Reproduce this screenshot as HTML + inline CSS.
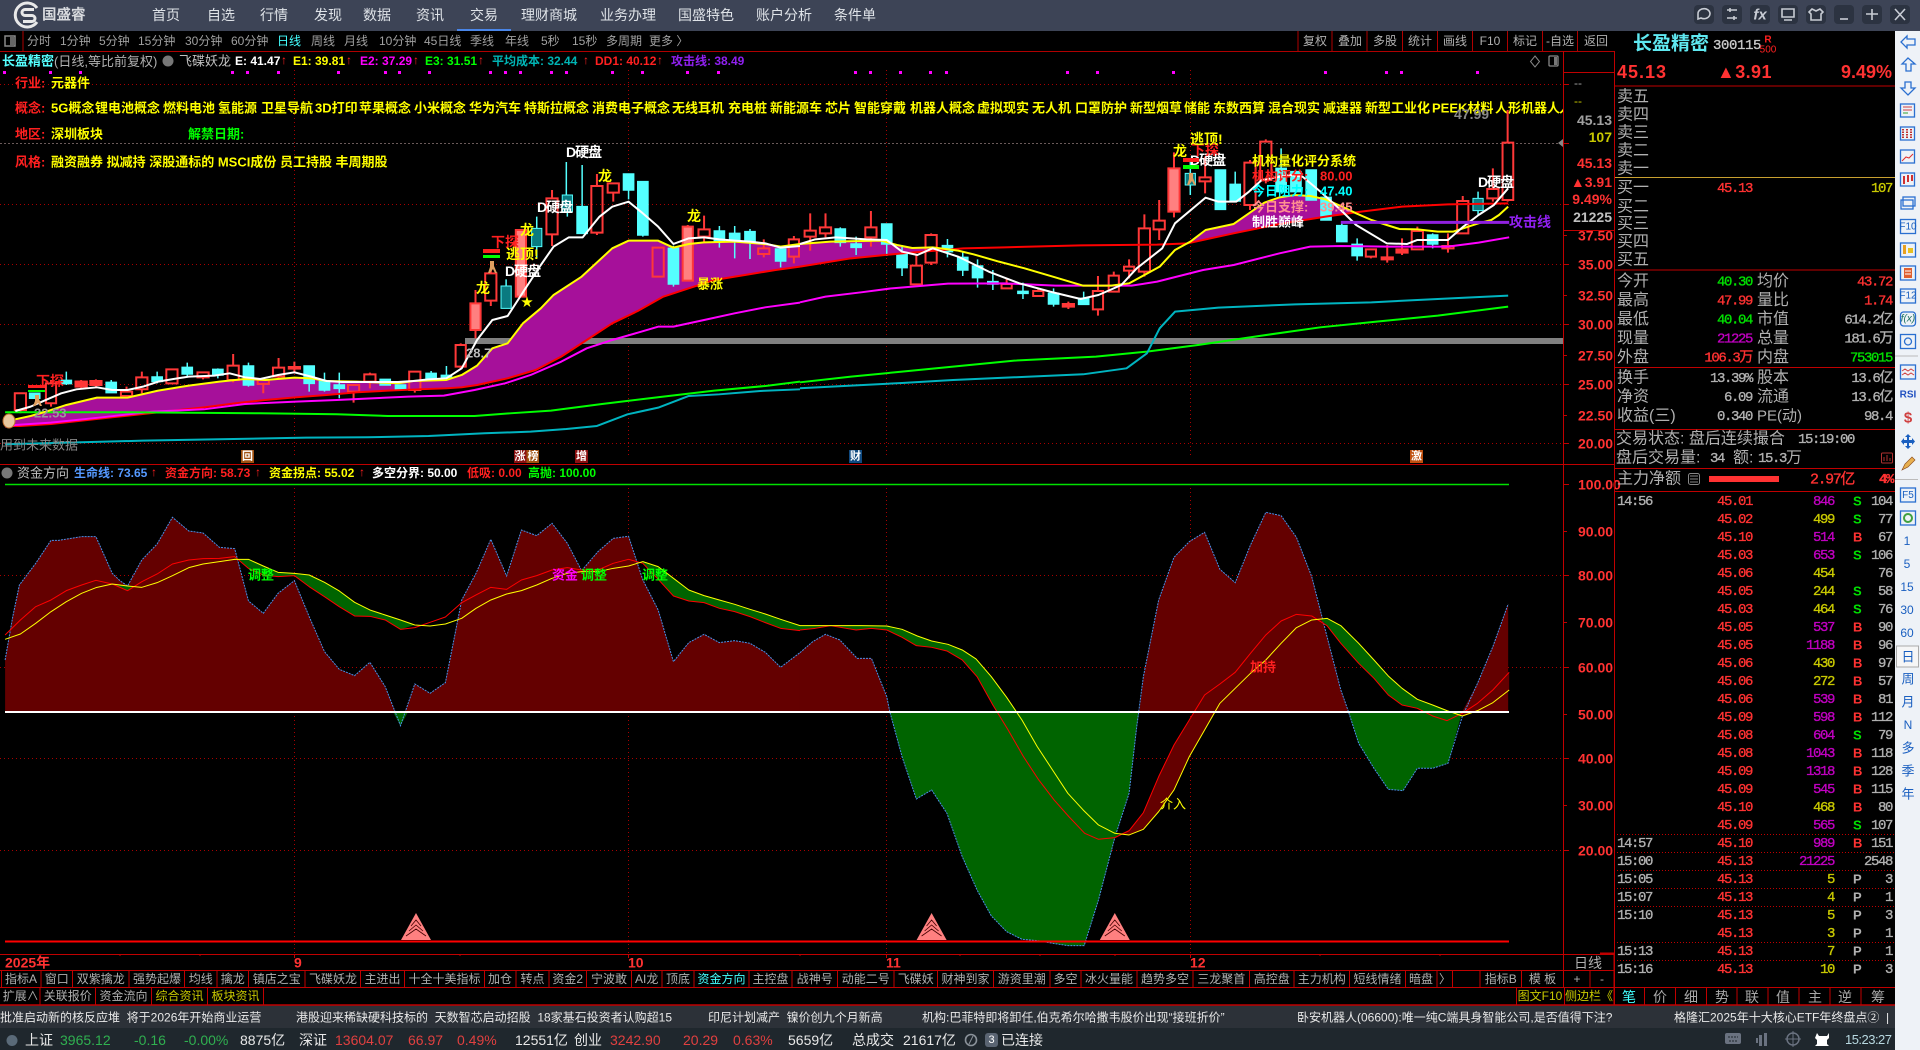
<!DOCTYPE html>
<html><head><meta charset="utf-8"><title>长盈精密</title>
<style>
html,body{margin:0;padding:0;background:#000;width:1920px;height:1050px;overflow:hidden}
svg{display:block}
text{font-family:"Liberation Sans","Noto Sans CJK SC",sans-serif;dominant-baseline:central;white-space:pre}
.z *{vector-effect:non-scaling-stroke}
.l{fill:none;stroke-linejoin:round}
.cr{fill:none;stroke:#ff3838;stroke-width:2}
.cp{fill:#ff8080;stroke:#ff3838;stroke-width:2}
.cf{fill:#ff3838;stroke:#ff3838;stroke-width:2}
.cc{fill:#54ffff;stroke:#54ffff;stroke-width:1.5}
.ct{fill:#0a7a80;stroke:#54ffff;stroke-width:1}
.tb{font-size:12px;fill:#a0a0a0}
.mn{font-size:14px;fill:#dfe3e8}
.b{font-weight:700}
.c13{font-size:13px;font-weight:700}
.y{fill:#ffff00}.r{fill:#ff2020}.g{fill:#00ff00}.w{fill:#fff}
.ax{font-size:14px;font-weight:700;fill:#ff3232}
.m{font-family:"Liberation Mono","Noto Sans CJK SC",monospace;font-size:14px;letter-spacing:-1.4px;stroke-width:.35px;transform:translateY(1px)}
.e{text-anchor:end}
.lb{font-size:16px;fill:#b0b0b0}
.gy{fill:#b0b0b0}.rd{fill:#ff3232}.gn{fill:#00e000}.mg{fill:#c000c0}.ye{fill:#c8c800}
.m.gy{stroke:#b0b0b0}.m.rd{stroke:#ff3232}.m.gn{stroke:#00e000}.m.mg{stroke:#c000c0}.m.ye{stroke:#c8c800}
.t{font-size:12px;fill:#b0b0b0;text-anchor:middle}
.n{font-size:12px;fill:#e8e8e8}
.s{font-size:14px}
.ic{fill:none;stroke:#2a6fd0;stroke-width:1.3}
.sb{font-size:12px;fill:#1a5fc0;text-anchor:middle}
.btn{fill:#2c3341}
.bi{fill:none;stroke:#c8ccd4;stroke-width:1.6}
</style></head><body>
<svg width="1920" height="1050" viewBox="0 0 1920 1050" xmlns="http://www.w3.org/2000/svg">
<defs>
<clipPath id="ca"><rect x="0" y="484" width="1563" height="228"/></clipPath>
<clipPath id="cb"><rect x="0" y="712" width="1563" height="240"/></clipPath>
<clipPath id="cm"><rect x="0" y="52" width="1563" height="412"/></clipPath>
</defs>
<rect width="1920" height="1050" fill="#000"/>
<!-- title bar -->
<rect width="1920" height="31" fill="#3d4456"/>
<rect x="457" y="29" width="54" height="2" fill="#4a86e8"/>
<path d="M37 8a12 12 0 1 0 0 14" fill="none" stroke="#e8e8e8" stroke-width="3"/>
<path d="M34 9.5H25a3 3 0 0 0 0 6h7a3 3 0 0 1 0 6h-9" fill="none" stroke="#e8e8e8" stroke-width="3"/>
<text x="42" y="15.5" font-size="14.5" font-weight="700" fill="#d8dade">国盛睿</text>
<g class="mn">
<text class="mn" x="152" y="15">首页</text><text class="mn" x="207" y="15">自选</text><text class="mn" x="260" y="15">行情</text><text class="mn" x="314" y="15">发现</text><text class="mn" x="363" y="15">数据</text><text class="mn" x="416" y="15">资讯</text><text class="mn" x="470" y="15">交易</text><text class="mn" x="521" y="15">理财商城</text><text class="mn" x="600" y="15">业务办理</text><text class="mn" x="678" y="15">国盛特色</text><text class="mn" x="756" y="15">账户分析</text><text class="mn" x="834" y="15">条件单</text>
</g>
<g>
<rect class="btn" x="1694" y="5" width="20" height="19" rx="4"/><rect class="btn" x="1722" y="5" width="20" height="19" rx="4"/><rect class="btn" x="1750" y="5" width="20" height="19" rx="4"/><rect class="btn" x="1778" y="5" width="20" height="19" rx="4"/><rect class="btn" x="1806" y="5" width="20" height="19" rx="4"/><rect class="btn" x="1834" y="5" width="20" height="19" rx="4"/><rect class="btn" x="1862" y="5" width="20" height="19" rx="4"/><rect class="btn" x="1890" y="5" width="20" height="19" rx="4"/>
<path class="bi" d="M1698 14a6 5 0 1 1 3 4l-3 1z"/><path class="bi" d="M1727 10h10M1727 18h10M1730 8v4M1734 16v4"/>
<text x="1760" y="15" font-size="15" font-weight="700" fill="#c8ccd4" text-anchor="middle" font-style="italic">fx</text>
<path class="bi" d="M1782 9h12v8h-12zM1784 20h8"/><path class="bi" d="M1812 9l4 2 4-2 3 3-2 2v6h-10v-6l-2-2z"/><path class="bi" d="M1840 19h8"/><path class="bi" d="M1872 9v11M1866 14h12"/><path class="bi" stroke-width="2" d="M1895 9l10 11M1905 9l-10 11"/>
</g>
<!-- toolbar -->
<rect x="5" y="36" width="10" height="10" fill="none" stroke="#888" stroke-width="1.5"/><rect x="10" y="37" width="4" height="8" fill="#666"/>
<path d="M23 31v20" stroke="#b00000"/>
<text class="tb" x="27" y="41">分时</text><text class="tb" x="60" y="41">1分钟</text><text class="tb" x="99" y="41">5分钟</text><text class="tb" x="138" y="41">15分钟</text><text class="tb" x="185" y="41">30分钟</text><text class="tb" x="231" y="41">60分钟</text><text class="tb" x="277" y="41" style="fill:#4ff">日线</text><text class="tb" x="311" y="41">周线</text><text class="tb" x="344" y="41">月线</text><text class="tb" x="379" y="41">10分钟</text><text class="tb" x="424" y="41">45日线</text><text class="tb" x="470" y="41">季线</text><text class="tb" x="505" y="41">年线</text><text class="tb" x="541" y="41">5秒</text><text class="tb" x="572" y="41">15秒</text><text class="tb" x="606" y="41">多周期</text><text class="tb" x="649" y="41">更多 〉</text>
<path d="M1298 31v20M1332 31v20M1367 31v20M1402.5 31v20M1437.5 31v20M1472.5 31v20M1507.5 31v20M1542.5 31v20M1577.5 31v20" stroke="#b00000"/>
<text class="t" x="1315" y="41">复权</text><text class="t" x="1350" y="41">叠加</text><text class="t" x="1385" y="41">多股</text><text class="t" x="1420" y="41">统计</text><text class="t" x="1455" y="41">画线</text><text class="t" x="1490" y="41">F10</text><text class="t" x="1525" y="41">标记</text><text class="t" x="1560" y="41">-自选</text><text class="t" x="1596" y="41">返回</text>
<path d="M0 51.5H1614" stroke="#b00000"/>
<!-- grid -->
<g stroke="#a80000" stroke-dasharray="1 3" fill="none">
<path d="M0 84.5H1563M0 204.5H1563M0 264.5H1563M0 324.5H1563M0 384.5H1563M0 443.5H1563M0 575.5H1563M0 667.5H1563M0 758.5H1563M0 850.5H1563M0 758.5H1563"/>
<path d="M294.5 70V455M628.5 70V455M886.5 70V455M1190.5 70V455M294.5 488V954M628.5 488V954M886.5 488V954M1190.5 488V954"/>
</g>
<path d="M0 143.5H1563" stroke="#6a5a5a" stroke-dasharray="2 2"/>
<path d="M1563 139v8l-5-4z" fill="#888"/>
<rect x="465" y="338" width="1098" height="6" fill="#808080"/>
<!-- dots -->
<path fill="#f0f" d="M3 71h3v3h-3zM49 71h3v3h-3zM79 71h3v3h-3zM231 71h3v3h-3zM246 71h3v3h-3zM277 71h3v3h-3zM337 71h3v3h-3zM384 71h3v3h-3zM398 71h3v3h-3zM428 71h3v3h-3zM489 71h3v3h-3zM504 71h3v3h-3zM519 71h3v3h-3zM550 71h3v3h-3zM565 71h3v3h-3zM611 71h3v3h-3zM641 71h3v3h-3zM686 71h3v3h-3zM717 71h3v3h-3zM854 71h3v3h-3zM869 71h3v3h-3zM899 71h3v3h-3zM929 71h3v3h-3zM945 71h3v3h-3zM1066 71h3v3h-3zM1096 71h3v3h-3zM1172 71h3v3h-3zM1324 71h3v3h-3zM1385 71h3v3h-3zM1400 71h3v3h-3zM1476 71h3v3h-3z"/>
<path d="M1535 56l4.5 5.5-4.5 5.5-4.5-5.5z" fill="none" stroke="#888"/><rect x="1549" y="56" width="9" height="10" rx="1" fill="none" stroke="#888" stroke-width="1.3"/><rect x="1554" y="57" width="3" height="8" fill="#777"/>
<!-- legend main -->
<g font-size="12.5" font-weight="700">
<text x="2" y="61" font-size="13" fill="#5ff">长盈精密<tspan fill="#b0b0b0" font-weight="400">(日线,等比前复权)</tspan></text>
<circle cx="168" cy="61" r="5.5" fill="#777"/>
<text x="179" y="61" font-size="13" font-weight="400" fill="#c0c0c0">飞碟妖龙</text>
<text x="235" y="61" font-size="12" class="w">E: 41.47</text><text x="281" y="60" font-size="12" class="r">↑</text>
<text x="293" y="61" font-size="12" class="y">E1: 39.81</text><text x="346" y="60" font-size="12" class="r">↑</text>
<text x="360" y="61" font-size="12" fill="#f0f">E2: 37.29</text><text x="413" y="60" font-size="12" class="r">↑</text>
<text x="425" y="61" font-size="12" class="g">E3: 31.51</text><text x="478" y="60" font-size="12" class="r">↑</text>
<text x="492" y="61" font-size="12" fill="#00b4b4">平均成本: 32.44</text><text x="583" y="60" font-size="12" class="r">↑</text>
<text x="595" y="61" font-size="12" class="r">DD1: 40.12</text><text x="657" y="60" font-size="12" class="r">↑</text>
<text x="671" y="61" font-size="12" fill="#9020f0">攻击线: 38.49</text>
</g>
<!-- info -->
<g class="c13" clip-path="url(#cm)">
<text class="c13 r" x="15" y="83">行业:</text><text class="c13 y" x="51" y="83">元器件</text>
<text class="c13 r" x="15" y="108">概念:</text>
<g class="y" style="fill:#ff0">
<text class="c13 y" x="51" y="108">5G概念</text><text class="c13 y" x="95" y="108">锂电池概念</text><text class="c13 y" x="163" y="108">燃料电池</text><text class="c13 y" x="218" y="108">氢能源</text><text class="c13 y" x="261" y="108">卫星导航</text><text class="c13 y" x="315" y="108">3D打印</text><text class="c13 y" x="359" y="108">苹果概念</text><text class="c13 y" x="414" y="108">小米概念</text><text class="c13 y" x="469" y="108">华为汽车</text><text class="c13 y" x="524" y="108">特斯拉概念</text><text class="c13 y" x="592" y="108">消费电子概念</text><text class="c13 y" x="672" y="108">无线耳机</text><text class="c13 y" x="728" y="108">充电桩</text><text class="c13 y" x="770" y="108">新能源车</text><text class="c13 y" x="825" y="108">芯片</text><text class="c13 y" x="854" y="108">智能穿戴</text><text class="c13 y" x="910" y="108">机器人概念</text><text class="c13 y" x="977" y="108">虚拟现实</text><text class="c13 y" x="1032" y="108">无人机</text><text class="c13 y" x="1075" y="108">口罩防护</text><text class="c13 y" x="1130" y="108">新型烟草</text><text class="c13 y" x="1184" y="108">储能</text><text class="c13 y" x="1213" y="108">东数西算</text><text class="c13 y" x="1268" y="108">混合现实</text><text class="c13 y" x="1323" y="108">减速器</text><text class="c13 y" x="1365" y="108">新型工业化</text><text class="c13 y" x="1432" y="108">PEEK材料</text><text class="c13 y" x="1495" y="108">人形机器人</text><text class="c13 y" x="1559" y="108">人</text>
</g>
<text class="c13 r" x="15" y="134">地区:</text><text class="c13 y" x="51" y="134">深圳板块</text><text class="c13 g" x="188" y="134">解禁日期:</text>
<text class="c13 r" x="15" y="162">风格:</text><text class="c13 y" x="51" y="162">融资融券 拟减持 深股通标的 MSCI成份 员工持股 丰周期股</text>
</g>
<text x="1454" y="114" font-size="14" font-weight="700" fill="#888">47.99</text>

<!-- main chart left -->
<g clip-path="url(#cm)">
<g class="z" transform="translate(0,180) scale(.5102,.3333)">
<path fill="#a6109a" d="M10 738L30 718L60 708L90 695L130 675L190 653L250 653L310 632L370 617L430 605L480 597L520 600L577 593L610 595L640 603L700 605L780 610L810 603L875 600L905 585L935 557L965 505L995 490L1025 430L1060 385L1085 345L1140 290L1200 205L1232 182L1290 182L1320 203L1350 192L1380 187L1440 185L1500 192L1530 200L1568 192L1568 260L1520 270L1460 285L1400 300L1350 325L1300 350L1250 393L1200 430L1150 480L1100 530L1050 570L995 595L935 615L905 622L875 625L820 628L760 632L700 637L640 645L580 652L520 660L460 670L400 682L340 692L280 702L220 712L160 722L100 732L40 738Z"/>
<!-- cyan -->
<path class="cc" d="M120 601h20v10h-20zM130 575v26M130 611v4M58 640h20v15h-20zM208 607h20v31h-20zM218 600v7M298 591h20v13h-20zM308 575v16M308 604v6M357 562h20v20h-20zM367 548v14M367 582v8M417 568h20v17h-20zM427 565v3M427 585v10M477 558h20v57h-20zM487 548v10M487 615v5M596 558h20v52h-20zM606 610v25M626 603h20v27h-20zM636 578v25M636 630v5M655 615h20v10h-20zM665 578v37M665 625v30M745 598h20v17h-20zM775 615h20v13h-20zM835 580h20v15h-20zM845 573v7M845 595v3M865 586h20v8h-20zM875 558v28M875 594v4M1131 80h20v80h-20zM1141 -45v125M1222 -18h20v48h-20zM1232 30v28M1250 5h20v160h-20zM1260 165v5M1310 205h20v107h-20zM1320 197v8M1320 312v8M1400 153h20v32h-20zM1410 138v15M1410 185v18M1430 160h20v20h-20zM1440 138v22M1440 180v55M1460 155h20v30h-20zM1470 147v8M1470 185v52M1520 207h20v36h-20zM1530 205v2M1530 243v19"/>
<path class="ct" d="M982 318h20v67h-20zM1042 145h20v55h-20zM1102 45h20v50h-20z"/><path stroke="#54ffff" stroke-width="1.5" d="M992 298v20M1052 110v35M1052 200v35M1110 -54v99M1112 95v15"/>
<!-- red -->
<path class="cr" d="M29 640h22v50h-22zM40 690v10M90 610h20v60h-20zM100 600v10M100 670v10M148 605h22v15h-22zM159 600v5M159 620v5M237 635h22v13h-22zM248 620v15M267 592h22v36h-22zM278 575v17M278 628v12M326 568h22v42h-22zM387 577h22v15h-22zM398 592v6M446 557h22v43h-22zM457 522v35M457 600v7M505 600h22v12h-22zM516 612v28M535 563h22v27h-22zM546 534v29M546 590v10M682 615h22v20h-22zM693 635v33M714 583h22v22h-22zM725 578v5M725 605v20M802 575h22v55h-22zM813 630v8M893 495h20v65h-20zM951 280h22v82h-22zM962 265v15M962 362v16M1071 55h22v108h-22zM1082 30v25M1082 163v35M1159 18h22v140h-22zM1170 -18v36M1170 158v7M1191 10h22v28h-22zM1202 38v27M1279 203h22v87h-22zM1369 148h22v22h-22zM1380 107v41M1380 170v15M1486 205h22v17h-22zM1497 178v27M1497 222v10M1546 178h20v52h-20zM1556 168v10M1556 230v20M903 490v5M903 560v5"/>
<path class="cf" d="M148 605h22v12h-22zM177 603h22v12h-22zM188 598v25M566 561h22v5h-22zM577 545v35"/>
<path class="cp" d="M922 370h20v80h-20zM1011 150h20v200h-20zM1338 140h20v162h-20z"/><path stroke="#ff3838" stroke-width="2" d="M932 330v40M932 450v25M1348 135v5"/>
<path class="l" stroke="#ff0000" stroke-width="2" d="M10 738L40 738L100 732L160 722L220 712L280 702L340 692L400 682L460 670L520 660L580 652L640 645L700 637L760 632L820 628L875 625L905 622L935 615L995 595L1050 570L1100 530L1150 480L1200 430L1250 393L1300 350L1350 325L1400 300L1460 285L1520 270L1568 260"/>
<path class="l" stroke="#ff00ff" stroke-width="2" d="M10 740L30 735L100 728L200 712L300 695L400 688L480 672L580 665L660 660L800 650L870 647L930 630L990 610L1040 585L1100 545L1150 505L1200 480L1250 458L1290 440L1320 440L1380 420L1440 400L1500 382L1568 368"/>
<path class="l" stroke="#00ff00" stroke-width="2" d="M10 697L250 697L510 700L660 703L760 708L930 708L1000 700L1080 692L1180 672L1300 650L1400 632L1500 618L1568 605"/>
<path class="l" stroke="#00b4c0" stroke-width="2" d="M10 793L160 787L280 782L430 778L600 773L720 772L840 768L950 760L1040 755L1110 747L1170 738L1230 703L1290 683L1350 648L1410 643L1490 633L1568 628"/>
<path class="l" stroke="#ffff00" stroke-width="2" d="M30 718L60 708L90 695L130 675L190 653L250 653L310 632L370 617L430 605L480 597L520 600L577 593L610 595L640 603L700 605L780 610L810 603L875 600L905 585L935 557L965 505L995 490L1025 430L1060 385L1085 345L1140 290L1200 205L1232 182L1290 182L1320 203L1350 192L1380 187L1440 185L1500 192L1530 200L1568 192"/>
<path class="l" stroke="#fff" stroke-width="2" d="M30 693L60 680L90 660L120 640L150 628L190 622L220 630L250 630L280 620L310 605L340 597L370 590L420 587L450 580L480 592L510 597L545 585L577 577L610 590L640 603L670 606L700 606L740 606L780 606L810 603L840 598L875 595L905 565L935 480L965 420L995 408L1030 325L1060 255L1085 200L1115 172L1142 172L1175 110L1200 80L1232 65L1260 100L1290 140L1320 192L1350 175L1380 172L1410 178L1440 182L1470 185L1500 190L1530 203L1568 198"/>
</g>
<!-- main chart right -->
<g class="z" transform="translate(800,120) scale(.5102,.3333)">
<path fill="#a6109a" d="M0 372L60 365L160 362L190 375L220 384L260 382L310 390L320 385L200 400L100 415L0 440Z"/>
<path fill="#a6109a" d="M760 370L795 330L850 312L880 280L910 248L940 232L970 225L1000 228L1030 238L1060 258L1090 278L1030 290L940 312L850 340Z"/>
<path class="cc" d="M69 327h20v40h-20zM79 322v5M79 367v13M100 372h20v10h-20zM110 350v22M110 382v23M160 312h20v60h-20zM170 372v36M190 402h20v41h-20zM200 375v27M200 443v25M279 377h20v18h-20zM289 357v20M289 395v17M309 412h20v38h-20zM319 395v17M319 450v18M338 438h20v35h-20zM348 418v20M348 473v30M368 485h20v7h-20zM378 450v35M378 492v18M427 514h20v6h-20zM437 488v26M437 520v17M487 520h20v32h-20zM497 505v15M497 552v8M546 535h20v18h-20zM556 515v20M814 150h20v118h-20zM843 193h20v50h-20zM853 155v38M933 145h20v70h-20zM943 85v60M962 155h20v60h-20zM992 150h20v90h-20zM1021 232h20v68h-20zM1052 317h20v48h-20zM1062 305v12M1082 373h20v34h-20zM1092 355v18M1092 407v15M1230 345h20v27h-20zM1240 340v5M1240 372v13"/>
<path class="ct" d="M755 160h20v35h-20zM1319 235h20v37h-20z"/><path stroke="#54ffff" stroke-width="1.5" d="M765 125v35M765 195v30M1329 215v20M1329 272v13"/>
<path class="cr" d="M9 332h22v18h-22zM20 280v52M20 350v42M39 322h22v18h-22zM50 280v42M50 340v12M128 322h22v30h-22zM139 273v49M139 352v28M246 345h22v83h-22zM257 340v5M257 428v7M217 437h22v56h-22zM228 405v32M395 492h20v13h-20zM405 475v17M405 505v3M457 513h20v15h-20zM467 505v8M574 513h20v55h-20zM584 468v45M584 568v19M605 467h20v48h-20zM615 455v12M635 440h20v12h-20zM645 418v22M645 452v23M664 325h22v130h-22zM675 283v42M675 455v15M693 302h22v26h-22zM704 240v62M704 328v32M783 172h22v12h-22zM794 110v62M794 184v36M871 128h22v127h-22zM882 120v8M882 255v15M902 65h22v115h-22zM913 58v7M913 180v10M1109 388h20v22h-20zM1119 385v3M1119 410v5M1199 333h22v55h-22zM1210 320v13M1259 378h22v7h-22zM1270 340v38M1270 385v13M1288 243h22v97h-22zM1299 228v15M1347 207h22v28h-22zM1358 145v62M1358 235v10M1377 68h21v172h-21zM1387 -30v98M1387 240v5"/>
<path class="cf" d="M515 552h22v8h-22zM526 545v22M1140 412h22v6h-22zM1151 375v37M1151 418v10M1169 388h22v10h-22zM1180 355v33M1180 398v7"/>
<path class="cp" d="M722 145h22v130h-22z"/><path stroke="#ff3838" stroke-width="2" d="M733 97v48M733 275v17"/>
<path class="l" stroke="#ff0000" stroke-width="2" d="M0 440L100 415L200 400L320 385L400 382L550 376L700 374L760 370L850 340L940 312L1030 290L1100 275L1180 260L1270 253L1388 250"/>
<path class="l" stroke="#ff00ff" stroke-width="2" d="M0 547L50 530L120 517L180 505L290 491L400 490L500 497L650 497L700 485L790 450L850 435L940 400L1000 380L1060 378L1150 380L1270 380L1330 368L1390 352"/>
<path class="l" stroke="#00ff00" stroke-width="2" d="M0 787L100 770L200 755L300 740L420 722L580 710L680 695L780 675L900 648L1020 622L1130 605L1250 587L1388 560"/>
<path class="l" stroke="#00b4c0" stroke-width="2" d="M0 805L100 797L200 789L300 780L420 772L555 763L640 745L680 700L705 625L735 575L820 563L970 553L1120 547L1250 537L1388 527"/>
<path class="l" stroke="#ffff00" stroke-width="2" d="M0 372L60 365L160 362L190 375L220 384L260 382L310 392L340 403L390 425L440 445L500 472L555 497L610 497L645 490L675 465L705 440L735 390L765 365L795 330L850 312L880 280L910 248L940 232L970 225L1000 228L1030 238L1060 258L1090 280L1120 300L1150 315L1175 327L1210 328L1250 335L1280 335L1300 325L1330 310L1355 300L1370 285L1388 260"/>
<path class="l" stroke="#fff" stroke-width="2" d="M0 372L30 358L70 352L130 358L170 360L200 395L230 405L260 385L310 410L370 455L430 490L490 515L550 537L585 525L630 495L660 445L710 385L735 310L795 233L820 245L855 245L880 215L905 180L960 165L985 170L1020 215L1060 270L1090 315L1150 370L1190 372L1210 360L1270 360L1300 320L1330 285L1360 255L1388 205"/>
<path stroke="#9020e0" stroke-width="3" d="M1060 307H1390"/>
</g>
</g>
<text x="1509" y="222" font-size="14" font-weight="700" fill="#9020f0">攻击线</text>
<!-- chart labels -->
<g font-size="14" font-weight="700">
<text x="566" y="152" class="w" letter-spacing="-1">D硬盘</text><text x="537" y="207" class="w" letter-spacing="-1">D硬盘</text><text x="505" y="271" class="w" letter-spacing="-1">D硬盘</text><text x="1190" y="160" class="w" letter-spacing="-1">D硬盘</text><text x="1478" y="182" class="w" letter-spacing="-1">D硬盘</text>
<text x="598" y="176" class="y">龙</text><text x="520" y="230" class="y">龙</text><text x="476" y="288" class="y">龙</text><text x="687" y="216" class="y">龙</text><text x="1173" y="151" class="y">龙</text>
<text x="36" y="381" class="r">下探</text><text x="491" y="242" class="r">下探</text><text x="1191" y="150" class="r">下探</text>
<text x="506" y="254" class="y">逃顶!</text><text x="1190" y="139" class="y">逃顶!</text>
<text x="697" y="284" class="y" font-size="13">暴涨</text>
<text x="466" y="353" font-size="13" fill="#bbb">28.7</text><text x="34" y="413" font-size="13" fill="#999">22.53</text>
<text x="0" y="445" font-size="13" fill="#888" font-weight="400">用到未来数据</text>
<text x="1252" y="161" font-size="13" class="y">机构量化评分系统</text>
<text x="1252" y="176" font-size="13" class="r">机构评分:</text><text x="1320" y="176" font-size="13" class="r">80.00</text>
<text x="1252" y="191" font-size="13" fill="#00ffff">今日阻力:</text><text x="1320" y="191" font-size="13" fill="#00ffff">47.40</text>
<text x="1252" y="207" font-size="13" fill="#ff9090">今日支撑:</text><text x="1320" y="207" font-size="13" fill="#ff9090">39.45</text>
<text x="1252" y="222" font-size="13" class="w">制胜巅峰</text>
</g>
<path fill="#ff2020" d="M483 249h17v4h-17zM28 385h17v3h-17zM1183 158h16v4h-16z"/><path fill="#00ff00" d="M483 255h17v3h-17zM28 390h17v2h-17zM1183 165h16v4h-16z"/>
<path fill="#e0a060" d="M490 261h4v5l3 7h-2l-2-4-3 4h-2l2-6zM35 395h4v4l3 7h-2l-2-3-3 3h-2l2-5zM1189 173h4v5l3 7h-2l-2-4-3 4h-2l2-6z"/>
<text x="527" y="302" font-size="12" class="y" text-anchor="middle">★</text>
<ellipse cx="9" cy="421" rx="6" ry="7" fill="#e8c8a0" stroke="#c07030"/>
<g font-size="11" text-anchor="middle" font-weight="700">
<rect x="241" y="450" width="13" height="13" fill="#a05010"/><text x="247.5" y="456.5" fill="#fff">回</text>
<rect x="514" y="450" width="12.5" height="13" fill="#8b1010"/><text x="520" y="456.5" fill="#fff">涨</text><rect x="526.5" y="450" width="12.5" height="13" fill="#a05010"/><text x="533" y="456.5" fill="#fff">榜</text>
<rect x="575" y="450" width="13" height="13" fill="#8b1010"/><text x="581.5" y="456.5" fill="#fff">增</text>
<rect x="849" y="450" width="13" height="13" fill="#104a80"/><text x="855.5" y="456.5" fill="#fff">财</text>
<rect x="1410" y="450" width="13" height="13" fill="#c05010"/><text x="1416.5" y="456.5" fill="#fff">激</text>
</g>
<path d="M0 464.5H1614" stroke="#c00000"/>
<!-- pane 2 legend -->
<circle cx="7" cy="473" r="5.5" fill="#777"/>
<g font-size="12" font-weight="700">
<text x="17" y="473" font-size="13" font-weight="400" fill="#c0c0c0">资金方向</text>
<text x="74" y="473" fill="#5599ff">生命线: 73.65</text><text x="151" y="472" class="r">↑</text>
<text x="165" y="473" class="r">资金方向: 58.73</text><text x="255" y="472" class="r">↑</text>
<text x="269" y="473" class="y">资金拐点: 55.02</text><text x="359" y="472" class="r">↑</text>
<text x="372" y="473" class="w">多空分界: 50.00</text>
<text x="467" y="473" class="r">低吸: 0.00</text>
<text x="528" y="473" class="g">高抛: 100.00</text>
</g>
<!-- pane 2 -->
<g clip-path="url(#ca)">
<g transform="translate(0,460) scale(.5102,.3333)"><path fill="#640000" d="M10 755L10 600L25 470L38 375L70 310L100 241L115 241L160 230L188 230L220 340L235 362L250 378L278 300L308 252L338 172L370 213L398 219L430 262L460 266L487 423L516 460L545 400L577 362L606 470L636 575L665 628L695 647L725 607L755 680L785 797L813 672L843 700L873 668L905 420L933 340L962 238L993 348L1022 210L1052 227L1082 190L1112 250L1140 332L1172 275L1202 235L1232 229L1260 360L1290 450L1320 605L1350 548L1380 523L1410 548L1440 542L1470 550L1500 577L1530 622L1568 578L1568 755Z"/></g>
<g transform="translate(800,460) scale(.5102,.3333)"><path fill="#640000" d="M0 755L0 578L25 545L50 523L78 540L112 595L140 595L170 710L176 755ZM665 755L673 650L703 420L733 292L763 245L793 217L823 328L853 368L883 255L913 157L943 167L973 232L1003 350L1033 530L1060 690L1075 755ZM1298 755L1328 670L1358 560L1388 432L1388 755Z"/></g>
</g>
<g clip-path="url(#cb)">
<g transform="translate(0,460) scale(.5102,.3333)"><path fill="#006400" d="M770 755L785 797L800 755Z"/></g>
<g transform="translate(800,460) scale(.5102,.3333)"><path fill="#006400" d="M176 755L200 890L228 1017L258 990L288 1060L318 1190L347 1290L375 1368L405 1415L435 1438L465 1442L495 1450L525 1457L557 1457L585 1320L617 1133L645 1000L660 800L665 755ZM1075 755L1095 850L1125 925L1153 988L1182 992L1210 925L1240 925L1270 910L1298 755Z"/></g>
</g>
<g class="z" transform="translate(0,460) scale(.5102,.3333)">
<path fill="none" stroke="#4a90e8" stroke-dasharray="2 1" d="M10 600L25 470L38 375L70 310L100 241L115 241L160 230L188 230L220 340L235 362L250 378L278 300L308 252L338 172L370 213L398 219L430 262L460 266L487 423L516 460L545 400L577 362L606 470L636 575L665 628L695 647L725 607L755 680L785 797L813 672L843 700L873 668L905 420L933 340L962 238L993 348L1022 210L1052 227L1082 190L1112 250L1140 332L1172 275L1202 235L1232 229L1260 360L1290 450L1320 605L1350 548L1380 523L1410 548L1440 542L1470 550L1500 577L1530 622L1568 578"/>
<path fill="#006400" d="M215 371L250 378L262 381L250 392Z"/>
<path fill="#006400" d="M460 298L487 298L516 318L545 337L577 340L606 345L636 367L665 393L695 427L725 450L755 465L785 480L813 495L785 508L755 480L725 469L695 468L665 440L636 410L606 380L577 347L545 350L516 345L487 325L460 290Z"/>
<path fill="#006400" d="M1260 305L1290 320L1320 355L1350 390L1380 407L1410 420L1440 433L1470 448L1500 462L1530 478L1568 497L1568 512L1530 505L1500 488L1470 470L1440 455L1410 445L1380 428L1350 423L1320 408L1290 358L1260 310Z"/>
<path class="l" stroke="#ff0000" stroke-width="1" d="M10 525L40 480L70 440L100 420L130 392L160 375L188 361L220 372L250 392L278 365L308 342L338 312L370 300L398 296L430 295L460 290L487 325L516 345L545 350L577 347L606 380L636 410L665 440L695 468L725 469L755 480L785 508L813 503L843 487L873 471L905 428L933 405L962 382L993 388L1022 360L1052 347L1082 330L1112 323L1140 330L1172 330L1202 310L1232 298L1260 310L1290 358L1320 408L1350 423L1380 428L1410 445L1440 455L1470 470L1500 488L1530 505L1568 512"/>
<path class="l" stroke="#ffff00" stroke-width="1" d="M10 538L40 522L70 490L100 455L130 425L160 400L188 383L220 372L250 378L278 382L308 368L338 347L370 323L398 312L430 305L460 298L487 298L516 318L545 337L577 340L606 345L636 367L665 393L695 427L725 450L755 465L785 480L813 495L843 498L873 492L905 475L933 445L962 420L993 402L1022 392L1052 375L1082 355L1112 340L1140 335L1172 335L1202 325L1232 318L1260 305L1290 320L1320 355L1350 390L1380 407L1410 420L1440 433L1470 448L1500 462L1530 478L1568 497"/>
</g>
<g class="z" transform="translate(800,460) scale(.5102,.3333)">
<path fill="none" stroke="#4a90e8" stroke-dasharray="2 1" d="M0 578L25 545L50 523L78 540L112 595L140 595L170 710L176 755L200 890L228 1017L258 990L288 1060L318 1190L347 1290L375 1368L405 1415L435 1438L465 1442L495 1450L525 1457L557 1457L585 1320L617 1133L645 1000L660 800L673 650L703 420L733 292L763 245L793 217L823 328L853 368L883 255L913 157L943 167L973 232L1003 350L1033 530L1060 690L1075 755L1095 850L1125 925L1153 988L1182 992L1210 925L1240 925L1270 910L1298 770L1328 670L1358 560L1388 432"/>
<path fill="#006400" d="M0 497L60 497L120 497L170 498L200 508L230 528L258 543L290 553L318 570L345 597L375 650L405 712L435 780L465 860L495 930L525 1000L555 1050L585 1095L617 1120L625 1123L617 1133L585 1138L558 1120L527 1070L498 1020L468 960L438 890L408 810L378 735L347 650L318 600L288 573L258 562L228 557L200 532L170 510L140 505L110 510L90 505L60 497L30 505L0 510Z"/>
<path fill="#640000" d="M625 1123L645 1125L673 1108L703 1055L733 990L763 890L793 810L823 730L853 685L883 640L913 600L943 550L973 503L1003 480L1020 476L1003 468L973 463L943 483L913 525L883 580L853 637L823 672L793 705L763 780L733 855L703 950L673 1058L645 1112Z"/>
<path fill="#006400" d="M1020 477L1033 475L1060 497L1095 550L1125 600L1153 648L1180 685L1210 718L1240 735L1268 752L1290 765L1268 782L1240 768L1210 745L1180 735L1153 705L1125 655L1095 610L1060 550L1033 497Z"/>
<path fill="#640000" d="M1290 765L1298 768L1328 752L1358 728L1390 690L1390 637L1358 690L1328 730L1298 760Z"/>
<path class="l" stroke="#ff0000" stroke-width="1" d="M0 510L30 505L60 497L90 505L110 510L140 505L170 510L200 532L228 557L258 562L288 573L318 600L347 650L378 735L408 810L438 890L468 960L498 1020L527 1070L558 1120L585 1138L617 1133L645 1112L673 1058L703 950L733 855L763 780L793 705L823 672L853 637L883 580L913 525L943 483L973 463L1003 468L1033 497L1060 550L1095 610L1125 655L1153 705L1180 735L1210 745L1240 768L1268 782L1298 760L1328 730L1358 690L1390 637"/>
<path class="l" stroke="#ffff00" stroke-width="1" d="M0 497L60 497L120 497L170 498L200 508L230 528L258 543L290 553L318 570L345 597L375 650L405 712L435 780L465 860L495 930L525 1000L555 1050L585 1095L617 1120L645 1125L673 1108L703 1055L733 990L763 890L793 810L823 730L853 685L883 640L913 600L943 550L973 503L1003 480L1033 475L1060 497L1095 550L1125 600L1153 648L1180 685L1210 718L1240 735L1268 752L1298 768L1328 752L1358 728L1390 690"/>
</g>
<path d="M5 484.5H1509" stroke="#00e000" stroke-width="1.5"/>
<path d="M5 712H1509" stroke="#fff" stroke-width="2"/>
<path d="M5 941.5H1509" stroke="#ff0000" stroke-width="2"/>
<!-- triangles -->
<g>
<path fill="#ff8080" d="M416 913l15 27h-30zM931.6 913l15 27h-30zM1114.8 913l15 27h-30z"/>
<path fill="none" stroke="#400" stroke-width=".8" d="M411 926l5-6 5 6M409 931l7-6 7 6M406 936l10-7 10 7M926.6 926l5-6 5 6M924.6 931l7-6 7 6M921.6 936l10-7 10 7M1109.8 926l5-6 5 6M1107.8 931l7-6 7 6M1104.8 936l10-7 10 7"/>
</g>
<g font-size="13" font-weight="700">
<text x="248" y="575" class="g">调整</text><text x="581" y="575" class="g">调整</text><text x="552" y="575" fill="#f0f">资金</text><text x="642" y="575" class="g">调整</text>
<text x="1250" y="667" class="r">加持</text><text x="1160" y="804" class="y" font-weight="400">介入</text>
</g>
<!-- axis -->
<path d="M1563.5 51V987" stroke="#c00000"/>
<path d="M1564 72.5H1614M1564 230.5H1614M1564 464.5H1614" stroke="#c00000"/>
<path stroke="#c00000" d="M1563 84.5h6M1563 143.5h6M1563 204.5h6M1563 235.5h4M1563 264.5h6M1563 295.5h4M1563 324.5h6M1563 355.5h4M1563 384.5h6M1563 415.5h4M1563 443.5h6M1563 484.5h6M1563 531.5h4M1563 575.5h6M1563 622.5h4M1563 667.5h6M1563 714.5h4M1563 758.5h6M1563 805.5h4M1563 850.5h6"/>
<text x="1574" y="83" font-size="12" fill="#a0a0a0">--</text><text x="1574" y="101" font-size="12" class="ye">--</text>
<text class="ax" x="1612" y="120" text-anchor="end" style="fill:#a0a0a0">45.13</text>
<text class="ax" x="1612" y="137" text-anchor="end" style="fill:#c8c800">107</text>
<text class="ax" x="1612" y="163" text-anchor="end">45.13</text>
<text class="ax" x="1612" y="182" text-anchor="end" font-size="12">▲3.91</text>
<text class="ax" x="1612" y="199" text-anchor="end">9.49%</text>
<text class="ax" x="1612" y="217" text-anchor="end" style="fill:#c0c0c0">21225</text>
<text class="ax" x="1578" y="235.5">37.50</text><text class="ax" x="1578" y="264.5">35.00</text><text class="ax" x="1578" y="295.5">32.50</text><text class="ax" x="1578" y="324.5">30.00</text><text class="ax" x="1578" y="355.5">27.50</text><text class="ax" x="1578" y="384.5">25.00</text><text class="ax" x="1578" y="415.5">22.50</text><text class="ax" x="1578" y="443.5">20.00</text>
<text class="ax" x="1578" y="484.5">100.00</text><text class="ax" x="1578" y="531.5">90.00</text><text class="ax" x="1578" y="575.5">80.00</text><text class="ax" x="1578" y="622.5">70.00</text><text class="ax" x="1578" y="667.5">60.00</text><text class="ax" x="1578" y="714.5">50.00</text><text class="ax" x="1578" y="758.5">40.00</text><text class="ax" x="1578" y="805.5">30.00</text><text class="ax" x="1578" y="850.5">20.00</text>
<path d="M1600 953.5h14" stroke="#c00000" stroke-width="2"/>
<!-- date axis -->
<path d="M0 954.5H1614" stroke="#c00000"/>
<path stroke="#c00000" d="M294.5 954v4M628.5 954v4M886.5 954v4M1190.5 954v4M120 954v2M200 954v2M460 954v2M800 954v2M960 954v2M1040 954v2M1115 954v2M1320 954v2M1440 954v2"/>
<g font-size="14" font-weight="700" class="r"><text class="ax" x="5" y="962.5">2025年</text><text class="ax" x="294" y="962.5">9</text><text class="ax" x="628" y="962.5">10</text><text class="ax" x="886" y="962.5">11</text><text class="ax" x="1190" y="962.5">12</text></g>
<text x="1588" y="963" font-size="14" fill="#b0b0b0" text-anchor="middle">日线</text>
<!-- tabs -->
<path d="M0 970.5H1614M0 987.5H1895M0 1005H1895" stroke="#c00000"/>
<path stroke="#c00000" d="M1.5 971v16M41 971v16M72.5 971v16M129 971v16M184.5 971v16M217 971v16M248.5 971v16M305 971v16M360.5 971v16M404.5 971v16M484.5 971v16M516 971v16M549 971v16M586.5 971v16M631.5 971v16M662 971v16M694 971v16M749 971v16M792 971v16M837.5 971v16M894 971v16M937.5 971v16M993.5 971v16M1050 971v16M1081 971v16M1137 971v16M1193 971v16M1249.5 971v16M1294 971v16M1349.5 971v16M1405.5 971v16M1437 971v16M1452.5 971v16M1480 971v16M1521.5 971v16M1563.5 971v16M1590 971v16M1614 954v52M40 988v17M95.5 988v17M151.5 988v17M207.5 988v17M263.5 988v17M1516.5 988v17M1564.5 988v17"/>
<g>
<text class="t" x="21" y="979">指标A</text><text class="t" x="56.7" y="979">窗口</text><text class="t" x="100.7" y="979">双紫擒龙</text><text class="t" x="157" y="979">强势起爆</text><text class="t" x="200.7" y="979">均线</text><text class="t" x="232.7" y="979">擒龙</text><text class="t" x="276.7" y="979">镇店之宝</text><text class="t" x="333" y="979">飞碟妖龙</text><text class="t" x="382.5" y="979">主进出</text><text class="t" x="444.5" y="979">十全十美指标</text><text class="t" x="500" y="979">加仓</text><text class="t" x="532.5" y="979">转点</text><text class="t" x="567.7" y="979">资金2</text><text class="t" x="609" y="979">宁波敢</text><text class="t" x="646.7" y="979">AI龙</text><text class="t" x="678" y="979">顶底</text><text class="t" x="721.5" y="979" style="fill:#4ff">资金方向</text><text class="t" x="770.5" y="979">主控盘</text><text class="t" x="814.7" y="979">战神号</text><text class="t" x="865.7" y="979">动能二号</text><text class="t" x="915.7" y="979">飞碟妖</text><text class="t" x="965.5" y="979">财神到家</text><text class="t" x="1021.7" y="979">游资里潮</text><text class="t" x="1065.5" y="979">多空</text><text class="t" x="1109" y="979">冰火量能</text><text class="t" x="1165" y="979">趋势多空</text><text class="t" x="1221.2" y="979">三龙聚首</text><text class="t" x="1271.7" y="979">高控盘</text><text class="t" x="1321.7" y="979">主力机构</text><text class="t" x="1377.5" y="979">短线情绪</text><text class="t" x="1421" y="979">暗盘</text><text class="t" x="1445" y="979">〉</text><text class="t" x="1500.7" y="979">指标B</text><text class="t" x="1542.5" y="979">模 板</text><text class="t" x="1577" y="979">+</text><text class="t" x="1602" y="979">-</text>
<text class="t" x="20.7" y="996">扩展∧</text><text class="t" x="67.7" y="996">关联报价</text><text class="t" x="123.5" y="996">资金流向</text><text class="t" x="179.5" y="996" style="fill:#c8c800">综合资讯</text><text class="t" x="235.5" y="996" style="fill:#c8c800">板块资讯</text>
<text class="t" x="1540" y="996" style="fill:#c8c800">图文F10</text><text class="t" x="1589" y="996" style="fill:#c8c800">侧边栏《</text>
</g>
<!-- right panel -->
<path d="M1614.5 51V1005" stroke="#c00000"/>
<text x="1633" y="44" font-size="19" font-weight="700" fill="#5fe8f0">长盈精密</text>
<text class="m" x="1713" y="45" style="font-size:14px;letter-spacing:-.4px;fill:#c8c8c8;stroke:#c8c8c8">300115</text>
<text x="1768" y="40" font-size="10" font-weight="700" class="r" text-anchor="middle">R</text>
<text x="1768" y="50" font-size="10" class="r" text-anchor="middle">500</text>
<text x="1617" y="72" font-size="18" font-weight="700" fill="#ff3232" letter-spacing="1">45.13</text>
<text x="1717" y="72" font-size="18" font-weight="700" fill="#ff3232" letter-spacing=".4">▲3.91</text>
<text x="1892" y="72" font-size="18" font-weight="700" fill="#ff3232" text-anchor="end">9.49%</text>
<path d="M1615 86H1895M1615 270H1895M1615 367.5H1895M1615 429.5H1895M1615 468.5H1895M1615 491.5H1895" stroke="#c00000"/>
<path d="M1615 177.5H1895" stroke="#c8a030"/>
<text class="lb" x="1617" y="97">卖五</text><text class="lb" x="1617" y="115">卖四</text><text class="lb" x="1617" y="133">卖三</text><text class="lb" x="1617" y="151">卖二</text><text class="lb" x="1617" y="169">卖一</text>
<text class="lb" x="1617" y="188">买一</text><text class="lb" x="1617" y="207">买二</text><text class="lb" x="1617" y="224">买三</text><text class="lb" x="1617" y="242">买四</text><text class="lb" x="1617" y="260">买五</text>
<text class="m e rd" x="1752" y="188">45.13</text><text class="m e ye" x="1892" y="188">107</text>
<text class="lb" x="1617" y="281.5">今开</text><text class="lb" x="1617" y="300.5">最高</text><text class="lb" x="1617" y="319.5">最低</text><text class="lb" x="1617" y="338.5">现量</text><text class="lb" x="1617" y="357.5">外盘</text>
<text class="lb" x="1757" y="281.5">均价</text><text class="lb" x="1757" y="300.5">量比</text><text class="lb" x="1757" y="319.5">市值</text><text class="lb" x="1757" y="338.5">总量</text><text class="lb" x="1757" y="357.5">内盘</text>
<text class="m e gn" x="1752" y="281.5">40.30</text><text class="m e rd" x="1892" y="281.5">43.72</text>
<text class="m e rd" x="1752" y="300.5">47.99</text><text class="m e rd" x="1892" y="300.5">1.74</text>
<text class="m e gn" x="1752" y="319.5">40.04</text><text class="m e gy" x="1892" y="319.5">614.2亿</text>
<text class="m e mg" x="1752" y="338.5">21225</text><text class="m e gy" x="1892" y="338.5">181.6万</text>
<text class="m e rd" x="1752" y="357.5">106.3万</text><text class="m e gn" x="1892" y="357.5">753015</text>
<text class="lb" x="1617" y="378">换手</text><text class="lb" x="1617" y="397">净资</text><text class="lb" x="1617" y="416">收益(三)</text>
<text class="lb" x="1757" y="378">股本</text><text class="lb" x="1757" y="397">流通</text><text class="lb" x="1757" y="416" style="font-size:15px">PE(动)</text>
<text class="m e gy" x="1752" y="378">13.39%</text><text class="m e gy" x="1892" y="378">13.6亿</text>
<text class="m e gy" x="1752" y="397">6.09</text><text class="m e gy" x="1892" y="397">13.6亿</text>
<text class="m e gy" x="1752" y="416">0.340</text><text class="m e gy" x="1892" y="416">98.4</text>
<text class="lb" x="1616" y="439">交易状态: 盘后连续撮合</text><text class="m gy" x="1798" y="439">15:19:00</text>
<text class="lb" x="1616" y="458">盘后交易量:</text><text class="m gy" x="1710" y="458">34</text><text class="lb" x="1733" y="458">额:</text><text class="m gy" x="1758" y="458">15.3</text><text class="lb" x="1786" y="458">万</text>
<rect x="1881.5" y="453" width="11" height="10" rx="1" fill="none" stroke="#b03030"/><path d="M1884 461v-4M1887 461v-6M1890 461v-3" stroke="#b03030"/>
<text class="lb" x="1617" y="479">主力净额</text>
<rect x="1688.5" y="473.5" width="11" height="11" rx="2" fill="none" stroke="#888"/><path d="M1690 476h8M1690 479h8M1690 482h8" stroke="#888"/>
<rect x="1709" y="476" width="70" height="6" fill="#ff3232"/>
<text class="m e rd" x="1854" y="479" style="font-size:15px">2.97亿</text><text class="m e rd" x="1893" y="479" style="font-weight:700">4%</text>
<!-- ticks -->
<path stroke="#c00000" stroke-dasharray="1 2" d="M1617 834.5H1895M1617 852.5H1895M1617 870.5H1895M1617 888.5H1895M1617 906.5H1895M1617 942.5H1895M1617 960.5H1895"/>
<text class="m gy" x="1617" y="501">14:56</text><text class="m gy" x="1617" y="843">14:57</text><text class="m gy" x="1617" y="861">15:00</text><text class="m gy" x="1617" y="879">15:05</text><text class="m gy" x="1617" y="897">15:07</text><text class="m gy" x="1617" y="915">15:10</text><text class="m gy" x="1617" y="951">15:13</text><text class="m gy" x="1617" y="969">15:16</text>
<g class="rd">
<text class="m e rd" x="1752" y="501">45.01</text><text class="m e rd" x="1752" y="519">45.02</text><text class="m e rd" x="1752" y="537">45.10</text><text class="m e rd" x="1752" y="555">45.03</text><text class="m e rd" x="1752" y="573">45.06</text><text class="m e rd" x="1752" y="591">45.05</text><text class="m e rd" x="1752" y="609">45.03</text><text class="m e rd" x="1752" y="627">45.05</text><text class="m e rd" x="1752" y="645">45.05</text><text class="m e rd" x="1752" y="663">45.06</text><text class="m e rd" x="1752" y="681">45.06</text><text class="m e rd" x="1752" y="699">45.06</text><text class="m e rd" x="1752" y="717">45.09</text><text class="m e rd" x="1752" y="735">45.08</text><text class="m e rd" x="1752" y="753">45.08</text><text class="m e rd" x="1752" y="771">45.09</text><text class="m e rd" x="1752" y="789">45.09</text><text class="m e rd" x="1752" y="807">45.10</text><text class="m e rd" x="1752" y="825">45.09</text><text class="m e rd" x="1752" y="843">45.10</text><text class="m e rd" x="1752" y="861">45.13</text><text class="m e rd" x="1752" y="879">45.13</text><text class="m e rd" x="1752" y="897">45.13</text><text class="m e rd" x="1752" y="915">45.13</text><text class="m e rd" x="1752" y="933">45.13</text><text class="m e rd" x="1752" y="951">45.13</text><text class="m e rd" x="1752" y="969">45.13</text>
</g>
<text class="m e mg" x="1834" y="501">846</text><text class="m e ye" x="1834" y="519">499</text><text class="m e mg" x="1834" y="537">514</text><text class="m e mg" x="1834" y="555">653</text><text class="m e ye" x="1834" y="573">454</text><text class="m e ye" x="1834" y="591">244</text><text class="m e ye" x="1834" y="609">464</text><text class="m e mg" x="1834" y="627">537</text><text class="m e mg" x="1834" y="645">1188</text><text class="m e ye" x="1834" y="663">430</text><text class="m e ye" x="1834" y="681">272</text><text class="m e mg" x="1834" y="699">539</text><text class="m e mg" x="1834" y="717">598</text><text class="m e mg" x="1834" y="735">604</text><text class="m e mg" x="1834" y="753">1043</text><text class="m e mg" x="1834" y="771">1318</text><text class="m e mg" x="1834" y="789">545</text><text class="m e ye" x="1834" y="807">468</text><text class="m e mg" x="1834" y="825">565</text><text class="m e mg" x="1834" y="843">989</text><text class="m e mg" x="1834" y="861">21225</text><text class="m e ye" x="1834" y="879">5</text><text class="m e ye" x="1834" y="897">4</text><text class="m e ye" x="1834" y="915">5</text><text class="m e ye" x="1834" y="933">3</text><text class="m e ye" x="1834" y="951">7</text><text class="m e ye" x="1834" y="969">10</text>
<g font-size="13" font-weight="700">
<text x="1853" y="501" class="gn">S</text><text x="1853" y="519" class="gn">S</text><text x="1853" y="537" class="rd">B</text><text x="1853" y="555" class="gn">S</text><text x="1853" y="591" class="gn">S</text><text x="1853" y="609" class="gn">S</text><text x="1853" y="627" class="rd">B</text><text x="1853" y="645" class="rd">B</text><text x="1853" y="663" class="rd">B</text><text x="1853" y="681" class="rd">B</text><text x="1853" y="699" class="rd">B</text><text x="1853" y="717" class="rd">B</text><text x="1853" y="735" class="gn">S</text><text x="1853" y="753" class="rd">B</text><text x="1853" y="771" class="rd">B</text><text x="1853" y="789" class="rd">B</text><text x="1853" y="807" class="rd">B</text><text x="1853" y="825" class="gn">S</text><text x="1853" y="843" class="rd">B</text><text x="1853" y="879" class="gy">P</text><text x="1853" y="897" class="gy">P</text><text x="1853" y="915" class="gy">P</text><text x="1853" y="933" class="gy">P</text><text x="1853" y="951" class="gy">P</text><text x="1853" y="969" class="gy">P</text>
</g>
<text class="m e gy" x="1892" y="501">104</text><text class="m e gy" x="1892" y="519">77</text><text class="m e gy" x="1892" y="537">67</text><text class="m e gy" x="1892" y="555">106</text><text class="m e gy" x="1892" y="573">76</text><text class="m e gy" x="1892" y="591">58</text><text class="m e gy" x="1892" y="609">76</text><text class="m e gy" x="1892" y="627">90</text><text class="m e gy" x="1892" y="645">96</text><text class="m e gy" x="1892" y="663">97</text><text class="m e gy" x="1892" y="681">57</text><text class="m e gy" x="1892" y="699">81</text><text class="m e gy" x="1892" y="717">112</text><text class="m e gy" x="1892" y="735">79</text><text class="m e gy" x="1892" y="753">118</text><text class="m e gy" x="1892" y="771">128</text><text class="m e gy" x="1892" y="789">115</text><text class="m e gy" x="1892" y="807">80</text><text class="m e gy" x="1892" y="825">107</text><text class="m e gy" x="1892" y="843">151</text><text class="m e gy" x="1892" y="861">2548</text><text class="m e gy" x="1892" y="879">3</text><text class="m e gy" x="1892" y="897">1</text><text class="m e gy" x="1892" y="915">3</text><text class="m e gy" x="1892" y="933">1</text><text class="m e gy" x="1892" y="951">1</text><text class="m e gy" x="1892" y="969">3</text>
<!-- right tabs -->
<path stroke="#c00000" d="M1644.5 988v17M1675.5 988v17M1706.5 988v17M1737 988v17M1768 988v17M1799 988v17M1830 988v17M1861 988v17"/>
<g font-size="14" fill="#a8a8a8" text-anchor="middle"><text x="1629" y="997" fill="#4ff">笔</text><text x="1660" y="997">价</text><text x="1691" y="997">细</text><text x="1722" y="997">势</text><text x="1752" y="997">联</text><text x="1783" y="997">值</text><text x="1815" y="997">主</text><text x="1845" y="997">逆</text><text x="1878" y="997">筹</text></g>
<!-- news -->
<rect x="0" y="1005.5" width="1895" height="22.5" fill="#2c3138"/>
<rect x="0" y="1028" width="1895" height="22" fill="#1f272d"/>
<path d="M0 1005H1895" stroke="#c00000" stroke-width="1.5"/>
<text class="n" x="0" y="1017.5">批准启动新的核反应堆  将于2026年开始商业运营</text>
<text class="n" x="296" y="1017.5">港股迎来稀缺硬科技标的  天数智芯启动招股  18家基石投资者认购超15</text>
<text class="n" x="708" y="1017.5">印尼计划减产  镍价创九个月新高</text>
<text class="n" x="922" y="1017.5">机构:巴菲特即将卸任,伯克希尔哈撒韦股价出现“接班折价”</text>
<text class="n" x="1297" y="1017.5">卧安机器人(06600):唯一纯C端具身智能公司,是否值得下注?</text>
<text class="n" x="1674" y="1017.5">格隆汇2025年十大核心ETF年终盘点②  |</text>
<!-- status -->
<circle cx="12" cy="1040.5" r="5.5" fill="#5a6a78"/>
<text class="s" x="25" y="1040" fill="#e8e8e8">上证</text><text class="s" x="60" y="1040" fill="#30b050">3965.12</text><text class="s" x="134" y="1040" fill="#30b050">-0.16</text><text class="s" x="184" y="1040" fill="#30b050">-0.00%</text><text class="s" x="240" y="1040" fill="#e8e8e8">8875亿</text>
<text class="s" x="299" y="1040" fill="#e8e8e8">深证</text><text class="s" x="335" y="1040" fill="#e04040">13604.07</text><text class="s" x="408" y="1040" fill="#e04040">66.97</text><text class="s" x="457" y="1040" fill="#e04040">0.49%</text><text class="s" x="515" y="1040" fill="#e8e8e8">12551亿</text>
<text class="s" x="574" y="1040" fill="#e8e8e8">创业</text><text class="s" x="610" y="1040" fill="#e04040">3242.90</text><text class="s" x="683" y="1040" fill="#e04040">20.29</text><text class="s" x="733" y="1040" fill="#e04040">0.63%</text><text class="s" x="788" y="1040" fill="#e8e8e8">5659亿</text>
<text class="s" x="852" y="1040" fill="#e8e8e8">总成交</text><text class="s" x="903" y="1040" fill="#e8e8e8">21617亿</text>
<circle cx="971" cy="1040" r="5.5" fill="none" stroke="#8a929a" stroke-width="1.6"/><path d="M969 1044l4-8" stroke="#8a929a"/>
<rect x="985" y="1033" width="13" height="14" rx="3" fill="#5a6472"/><text x="991.5" y="1040" font-size="11" fill="#fff" text-anchor="middle">3</text>
<text class="s" x="1001" y="1040" fill="#e8e8e8">已连接</text>
<rect x="1725" y="1033" width="16" height="11" rx="2" fill="#6a7280"/><path d="M1728 1037h10M1729 1041h8" stroke="#1f272d" stroke-dasharray="2 1"/>
<path fill="#6a7280" d="M1759 1035h3v11h-3zM1764 1033h3v13h-3zM1756 1038h2v5h-2z"/>
<circle cx="1793" cy="1039" r="6" fill="none" stroke="#6a7280" stroke-width="1.5"/><path d="M1793 1031v16M1785 1039h16" stroke="#6a7280"/>
<path fill="#fff" d="M1817 1033l2 3h8l2-3v5l-2 2v4l2 2h-14l2-2v-4l-2-2z"/>
<text x="1845" y="1039.5" font-size="13" fill="#b8d8e0" textLength="47" lengthAdjust="spacing">15:23:27</text>
<!-- sidebar -->
<rect x="1895" y="31" width="25" height="1019" fill="#eef2f7"/>
<path class="ic" stroke-width="1.4" d="M1901 42l6-6v3h8v6h-8v3zM1908 58l-6 6h4v7h5v-7h4zM1905 82v6h-4l7 7 7-7h-4v-6z"/>
<rect class="ic" x="1900.5" y="104" width="14" height="13"/><path d="M1903 107h9M1903 110h9" stroke="#d04040"/><path d="M1903 113h5" stroke="#30a030"/>
<rect class="ic" x="1900.5" y="127" width="14" height="13"/><path d="M1903 129v9M1907 129v9M1911 129v9" stroke="#c03030" stroke-width="2" stroke-dasharray="1.5 1"/>
<rect class="ic" x="1900.5" y="150" width="14" height="13"/><path d="M1902 161l4-4 3 1 4-4" fill="none" stroke="#e03030"/>
<rect class="ic" x="1900.5" y="173" width="14" height="13"/><path d="M1904 176v8M1908 175v7M1912 175v6" stroke="#d03030" stroke-width="2"/>
<rect class="ic" x="1903" y="197" width="12" height="9"/><rect class="ic" x="1901" y="200" width="12" height="9" fill="#eef2f7"/>
<rect class="ic" x="1900.5" y="219.5" width="15" height="14"/><text x="1908" y="227" font-size="10" fill="#1a5fc0" text-anchor="middle">F10</text>
<rect class="ic" x="1900.5" y="243" width="15" height="14"/><rect x="1903" y="245" width="3" height="9" fill="#e8a020"/><rect x="1908" y="248" width="5" height="5" fill="#e8c020"/>
<rect class="ic" x="1900.5" y="266" width="15" height="14"/><rect x="1904" y="268" width="8" height="10" fill="#e06030"/><path d="M1905 271h6M1905 274h6" stroke="#fff"/>
<rect class="ic" x="1900.5" y="289" width="15" height="14"/><text x="1908" y="296" font-size="10" fill="#1a5fc0" text-anchor="middle">F12</text>
<rect class="ic" x="1900.5" y="312" width="15" height="14" rx="3"/><text x="1908" y="319" font-size="10" fill="#1a7060" text-anchor="middle" font-style="italic">f(x)</text>
<rect class="ic" x="1900.5" y="334.5" width="15" height="14"/><circle cx="1908" cy="341.5" r="3.5" class="ic"/>
<path d="M1895 356H1918M1895 479.5H1918" stroke="#bbb"/>
<rect class="ic" x="1900.5" y="365" width="15" height="14"/><path d="M1902 371l3-2 3 2 3-2 3 2M1902 375l3-2 3 2 3-2 3 2" fill="none" stroke="#d04040"/>
<text x="1908" y="395" font-size="10" font-weight="700" fill="#2050c0" text-anchor="middle">RSI</text>
<text x="1908" y="418" font-size="15" font-weight="700" fill="#d04040" text-anchor="middle">$</text>
<path fill="#1a5fc0" d="M1908 434l3 3h-2v3h3v-2l3 3.5-3 3.5v-2h-3v3h2l-3 3-3-3h2v-3h-3v2l-3-3.5 3-3.5v2h3v-3h-2z"/>
<path d="M1902 470l3-6 7-7 3 3-7 7z" fill="#e8b050" stroke="#905020" stroke-width=".7"/>
<rect class="ic" x="1900.5" y="488" width="15" height="14" stroke-width="1.6"/><text x="1908" y="495.5" font-size="10" fill="#1a5fc0" text-anchor="middle">F5</text>
<rect class="ic" x="1900.5" y="511" width="15" height="14" stroke-width="1.6"/><circle cx="1908" cy="518" r="4" fill="none" stroke="#40a040" stroke-width="2"/>
<text class="sb" x="1907" y="541">1</text><text class="sb" x="1907" y="564">5</text><text class="sb" x="1907" y="587">15</text><text class="sb" x="1907" y="610">30</text><text class="sb" x="1907" y="633">60</text>
<rect x="1896.5" y="646" width="22" height="21" fill="#f6f6f6" stroke="#aaa"/>
<text class="sb" x="1908" y="657" style="font-size:13px">日</text><text class="sb" x="1908" y="679" style="font-size:13px">周</text><text class="sb" x="1908" y="702" style="font-size:13px">月</text><text class="sb" x="1908" y="725">N</text><text class="sb" x="1908" y="748" style="font-size:13px">多</text><text class="sb" x="1908" y="771" style="font-size:13px">季</text><text class="sb" x="1908" y="794" style="font-size:13px">年</text>
</svg>
</body></html>
